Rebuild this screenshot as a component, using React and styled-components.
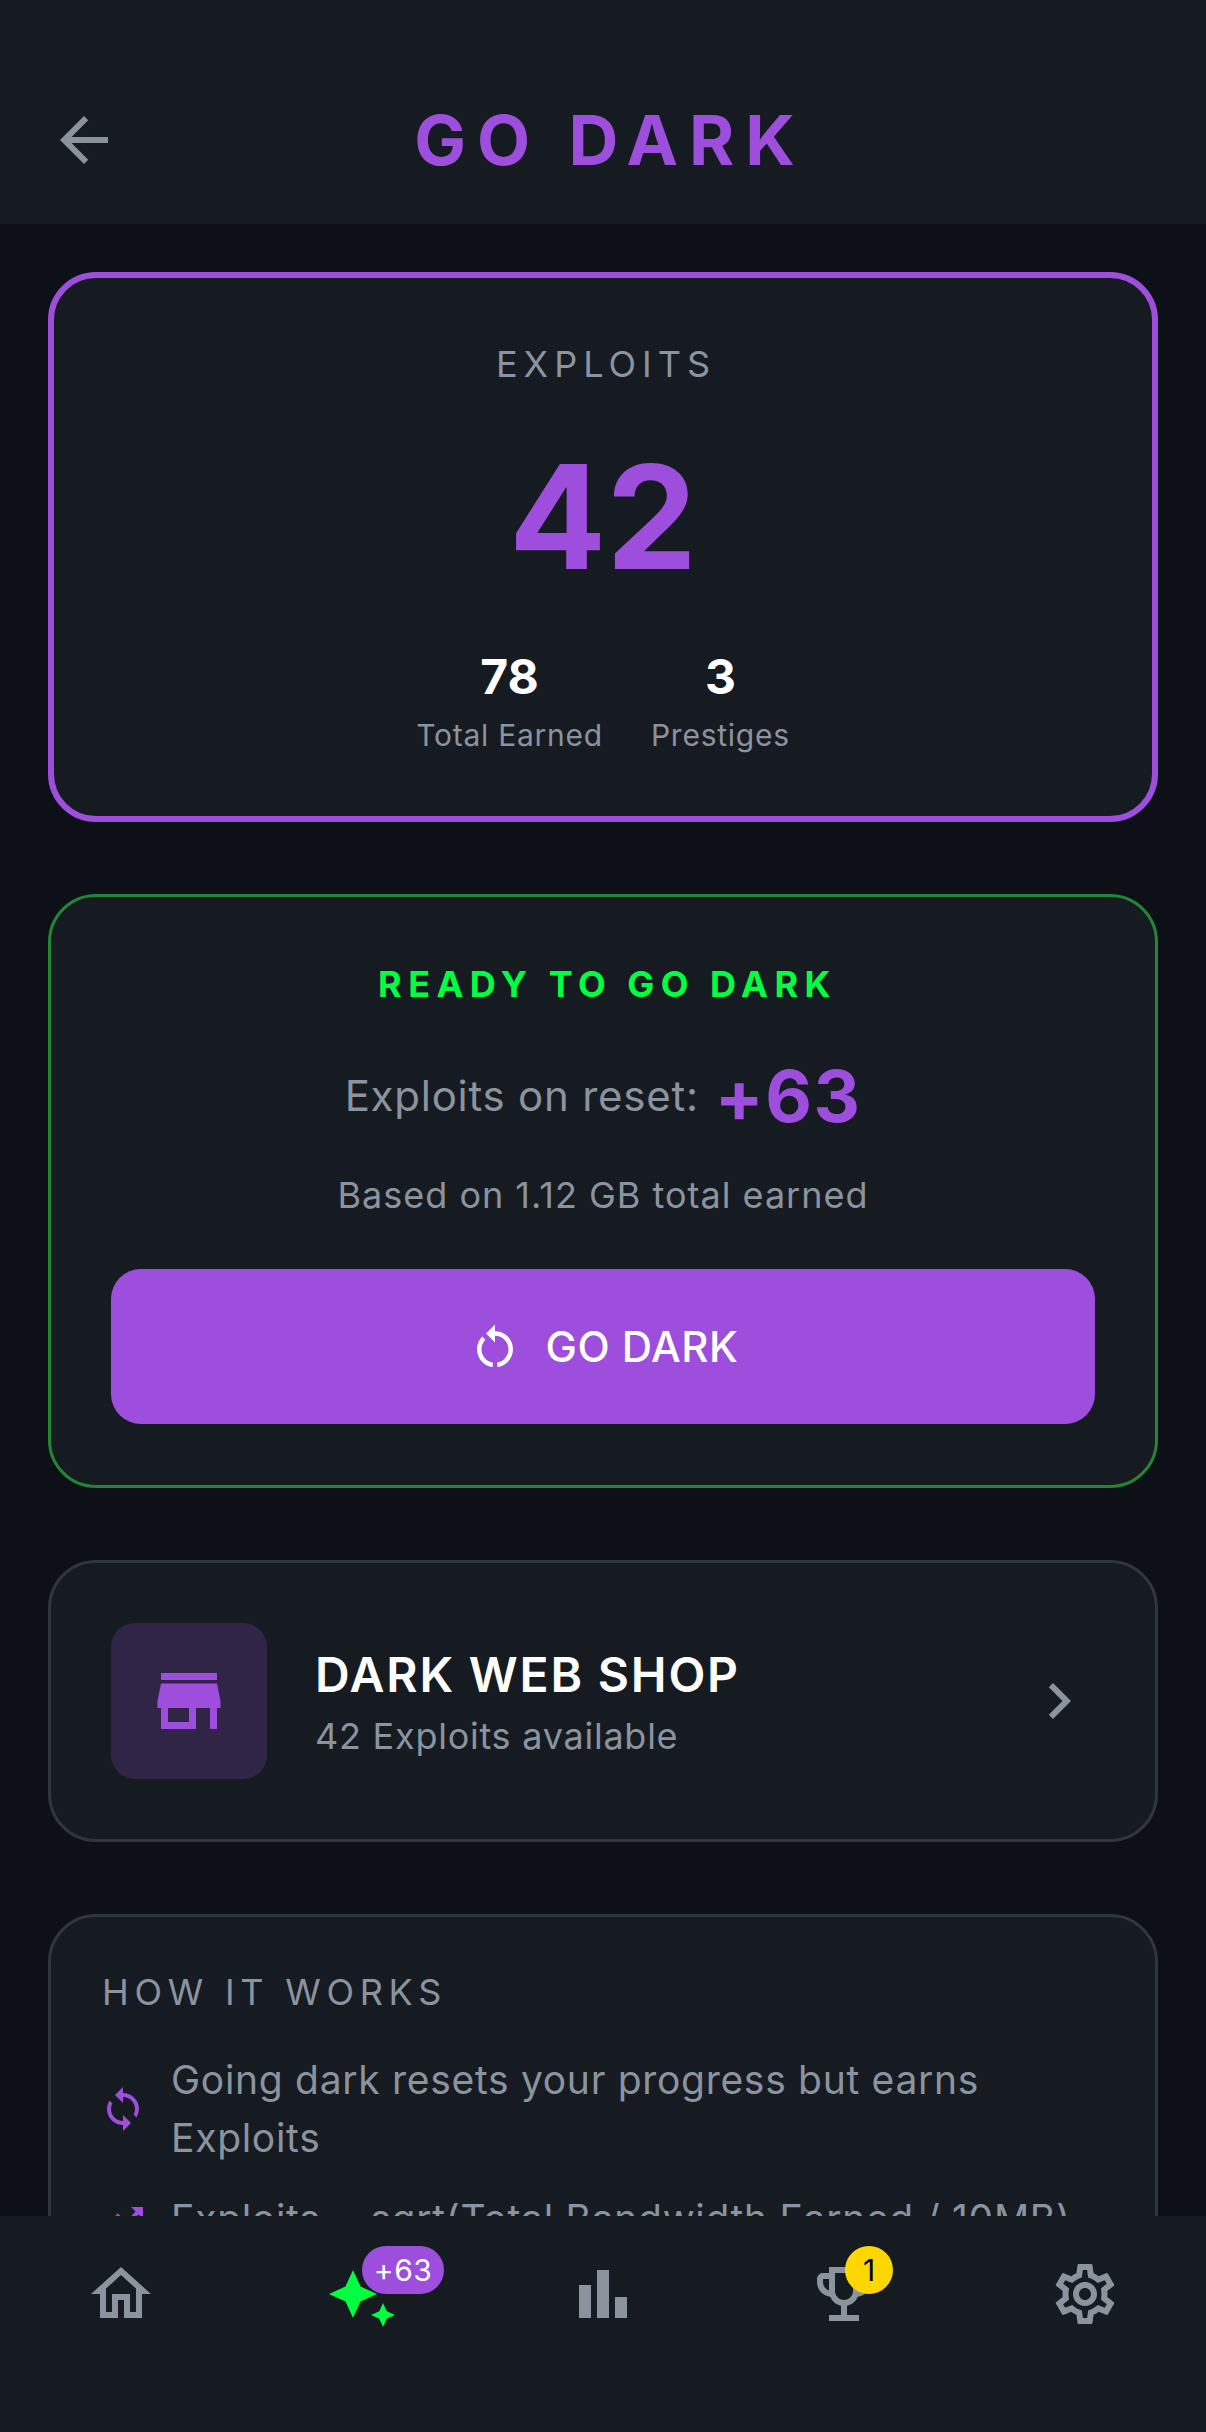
import React from "react";
import styled, { createGlobalStyle } from "styled-components";
import {
  MdArrowBack,
  MdRestartAlt,
  MdStore,
  MdChevronRight,
  MdSync,
  MdTrendingUp,
  MdOutlineHome,
  MdAutoAwesome,
  MdOutlineEmojiEvents,
  MdOutlineSettings,
} from "react-icons/md";

const purple = "#9D4EDD";
const green = "#00FF41";
const grey = "#8B949E";
const panel = "#161B22";
const ground = "#0D1117";

const Global = createGlobalStyle`
  html, body { margin: 0; padding: 0; background: ${ground}; }
  body { font-family: Inter, "Liberation Sans", sans-serif; color: #fff; }
  * { box-sizing: border-box; }
`;

const Screen = styled.div`
  width: 1206px;
  height: 2432px;
  display: grid;
  grid-template-rows: 224px 1fr 216px;
  overflow: hidden;
  background: ${ground};
`;

const Header = styled.header`
  background: ${panel};
  display: flex;
  align-items: flex-end;
  padding: 0 48px 48px;
`;

const BackSlot = styled.div`
  width: 72px;
  height: 72px;
  color: ${grey};
  display: flex;
`;

const Title = styled.h1`
  flex: 1;
  margin: 0;
  text-align: center;
  font-size: 69px;
  line-height: 72px;
  font-weight: 700;
  letter-spacing: 11px;
  color: ${purple};
`;

const Spacer = styled.div`
  width: 58px;
`;

const Scroll = styled.main`
  overflow: hidden;
  padding: 48px 48px 0;
  display: flex;
  flex-direction: column;
  gap: 72px;
`;

const Card = styled.section`
  flex: none;
  background: ${panel};
  border-radius: 48px;
  border: ${(p) => p.$weight || 3}px solid ${(p) => p.$edge || "#30363D"};
`;

const BalanceCard = styled(Card)`
  padding: 64px 60px 63px;
  text-align: center;
`;

const SmallCaps = styled.div`
  font-size: 36px;
  letter-spacing: 6px;
  color: ${grey};
`;

const BalanceLabel = styled(SmallCaps)`
  padding-left: 6px;
`;

const BigNumber = styled.div`
  margin-top: 43px;
  font-size: 144px;
  font-weight: 700;
  color: ${purple};
`;

const Stats = styled.div`
  margin-top: 43px;
  display: flex;
  justify-content: center;
  gap: 48px;
`;

const Stat = styled.div`
  display: flex;
  flex-direction: column;
  align-items: center;
`;

const StatValue = styled.div`
  font-size: 48px;
  font-weight: 700;
  color: #fff;
  margin-bottom: 11px;
`;

const StatLabel = styled.div`
  font-size: 30px;
  letter-spacing: 0.75px;
  color: ${grey};
`;

const ResetCard = styled(Card)`
  padding: 65px 60px 61px;
  text-align: center;
`;

const Ready = styled.div`
  padding-left: 9px;
  font-size: 36px;
  font-weight: 700;
  letter-spacing: 6.5px;
  color: ${green};
`;

const RewardRow = styled.div`
  margin-top: 46px;
  display: flex;
  justify-content: center;
  align-items: center;
  gap: 16px;
`;

const RewardLabel = styled.span`
  font-size: 42px;
  letter-spacing: 0.75px;
  color: ${grey};
`;

const RewardValue = styled.span`
  font-size: 72px;
  font-weight: 700;
  letter-spacing: 1.5px;
  color: ${purple};
`;

const Basis = styled.div`
  margin-top: 34px;
  font-size: 36px;
  letter-spacing: 1px;
  color: ${grey};
`;

const ResetButton = styled.button`
  margin-top: 52px;
  width: 100%;
  height: 155px;
  border: none;
  border-radius: 30px;
  background: ${purple};
  color: #fff;
  display: flex;
  align-items: center;
  justify-content: center;
  gap: 24px;
  font-family: inherit;
  font-size: 42px;
  font-weight: 500;
  letter-spacing: 0.5px;
`;

const ShopCard = styled(Card)`
  padding: 60px;
  display: flex;
  align-items: center;
  gap: 48px;
  color: ${grey};
`;

const ShopIcon = styled.div`
  width: 156px;
  height: 156px;
  flex: none;
  border-radius: 24px;
  background: rgba(157, 78, 221, 0.2);
  color: ${purple};
  display: flex;
  align-items: center;
  justify-content: center;
`;

const ShopText = styled.div`
  flex: 1;
`;

const ShopName = styled.div`
  font-size: 48px;
  font-weight: 600;
  letter-spacing: 1.8px;
  color: #fff;
`;

const ShopHint = styled.div`
  margin-top: 10px;
  font-size: 36px;
  letter-spacing: 0.75px;
  color: ${grey};
`;

const InfoCard = styled(Card)`
  padding: 53px 48px 48px;
`;

const InfoTitle = styled(SmallCaps)`
  margin-bottom: 37px;
  padding-left: 3px;
  letter-spacing: 5.75px;
`;

const InfoList = styled.div`
  display: flex;
  flex-direction: column;
  gap: 23px;
`;

const InfoRow = styled.div`
  display: flex;
  align-items: center;
  gap: 24px;
  color: ${purple};
`;

const InfoText = styled.div`
  flex: 1;
  font-size: 39px;
  line-height: 58px;
  letter-spacing: 0.7px;
  color: ${grey};
`;

const TabBar = styled.nav`
  background: ${panel};
  display: grid;
  grid-template-columns: repeat(5, 1fr);
  padding-top: 42px;
  position: relative;
  z-index: 1;
`;

const Tab = styled.div`
  display: flex;
  justify-content: center;
  color: ${(p) => (p.$active ? green : grey)};
`;

const IconWrap = styled.div`
  position: relative;
  width: 72px;
  height: 72px;
`;

const Badge = styled.span`
  position: absolute;
  top: -12px;
  left: ${(p) => p.$left}px;
  min-width: 48px;
  height: 48px;
  padding: 0 ${(p) => p.$pad || 0}px;
  border-radius: 24px;
  background: ${(p) => p.$fill};
  color: ${(p) => p.$ink};
  font-size: 30px;
  line-height: 48px;
  letter-spacing: ${(p) => p.$track || 0}px;
  text-align: center;
`;

// Three-bar chart glyph, heights 11/16/7 on a 24-unit grid
const BarsIcon = ({ size }) => (
  <svg width={size} height={size} viewBox="0 0 24 24" fill="currentColor">
    <path d="M4 9h4v11H4zm12 4h4v7h-4zm-6-9h4v16h-4z" />
  </svg>
);

export default function App() {
  return (
    <Screen>
      <Global />
      <Header>
        <BackSlot>
          <MdArrowBack size={72} />
        </BackSlot>
        <Title>GO DARK</Title>
        <Spacer />
      </Header>

      <Scroll>
        <BalanceCard $weight={6} $edge={purple}>
          <BalanceLabel>EXPLOITS</BalanceLabel>
          <BigNumber>42</BigNumber>
          <Stats>
            <Stat>
              <StatValue>78</StatValue>
              <StatLabel>Total Earned</StatLabel>
            </Stat>
            <Stat>
              <StatValue>3</StatValue>
              <StatLabel>Prestiges</StatLabel>
            </Stat>
          </Stats>
        </BalanceCard>

        <ResetCard $edge="#238636">
          <Ready>READY TO GO DARK</Ready>
          <RewardRow>
            <RewardLabel>Exploits on reset:</RewardLabel>
            <RewardValue>+63</RewardValue>
          </RewardRow>
          <Basis>Based on 1.12 GB total earned</Basis>
          <ResetButton>
            <MdRestartAlt size={54} />
            GO DARK
          </ResetButton>
        </ResetCard>

        <ShopCard>
          <ShopIcon>
            <MdStore size={84} />
          </ShopIcon>
          <ShopText>
            <ShopName>DARK WEB SHOP</ShopName>
            <ShopHint>42 Exploits available</ShopHint>
          </ShopText>
          <MdChevronRight size={72} />
        </ShopCard>

        <InfoCard>
          <InfoTitle>HOW IT WORKS</InfoTitle>
          <InfoList>
            <InfoRow>
              <MdSync size={48} />
              <InfoText>Going dark resets your progress but earns Exploits</InfoText>
            </InfoRow>
            <InfoRow>
              <MdTrendingUp size={48} />
              <InfoText>Exploits = sqrt(Total Bandwidth Earned / 10MB)</InfoText>
            </InfoRow>
          </InfoList>
        </InfoCard>
      </Scroll>

      <TabBar>
        <Tab>
          <IconWrap>
            <MdOutlineHome size={72} />
          </IconWrap>
        </Tab>
        <Tab $active>
          <IconWrap>
            <MdAutoAwesome size={72} />
            <Badge $left={36} $pad={12} $track={0.5} $fill={purple} $ink="#fff">+63</Badge>
          </IconWrap>
        </Tab>
        <Tab>
          <IconWrap>
            <BarsIcon size={72} />
          </IconWrap>
        </Tab>
        <Tab>
          <IconWrap>
            <MdOutlineEmojiEvents size={72} />
            <Badge $left={37} $fill="#FFD700" $ink="#000">1</Badge>
          </IconWrap>
        </Tab>
        <Tab>
          <IconWrap>
            <MdOutlineSettings size={72} />
          </IconWrap>
        </Tab>
      </TabBar>
    </Screen>
  );
}
